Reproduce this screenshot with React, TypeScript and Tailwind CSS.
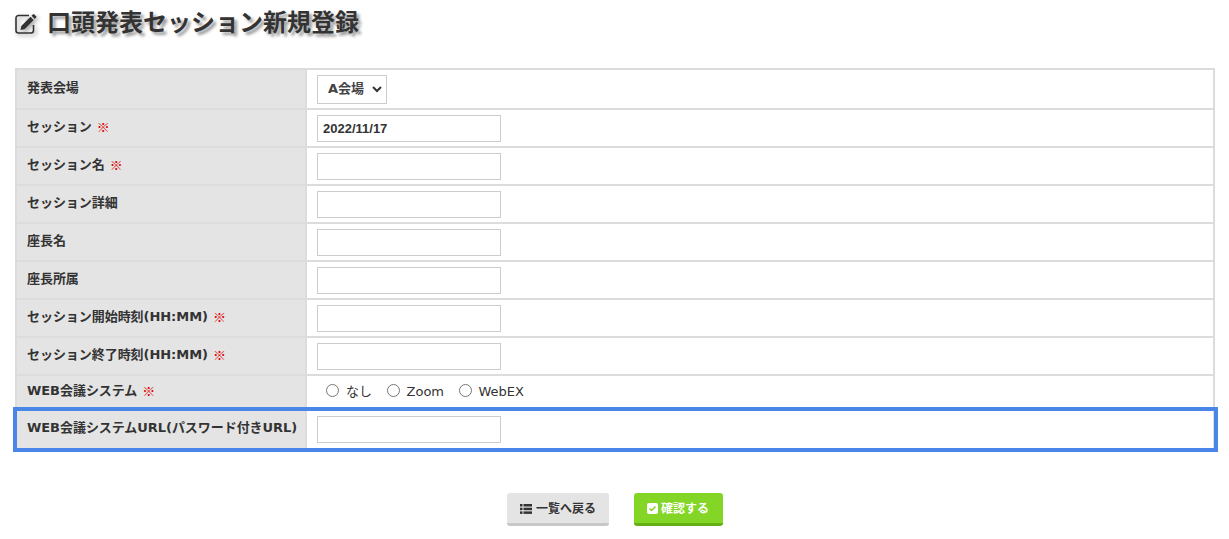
const jp = '"DejaVu Sans", "Noto Sans CJK JP", sans-serif';

function Req() {
  return <span className="text-[#e00000] font-bold ml-[5px] [font-family:'Noto_Sans_CJK_JP',sans-serif]">※</span>;
}

function Input({ value = "", w = "w-[184px]" }: { value?: string; w?: string }) {
  return (
    <input
      readOnly
      value={value}
      className={`${w} h-[27px] border border-[#cccccc] bg-white px-[5px] text-[13px] font-bold text-[#333] outline-none [font-family:'Liberation_Sans',sans-serif]`}
    />
  );
}

function Row({ label, req, children, h = "h-[38px]", pb = "pb-[3px]", last }: { label: string; req?: boolean; children: React.ReactNode; h?: string; pb?: string; last?: boolean }) {
  return (
    <div className={`flex ${h} ${last ? "" : "border-b-2 border-[#dcdcdc]"}`}>
      <div className={`w-[290px] shrink-0 bg-[#e4e4e4] pl-[10px] flex items-center text-[13px] leading-[20px] tracking-[-0.05px] font-bold text-[#333] border-r-2 border-[#dcdcdc] ${pb} whitespace-nowrap`}>
        <span>{label}</span>
        {req && <Req />}
      </div>
      <div className="flex-1 flex items-center pl-[10px] bg-white">{children}</div>
    </div>
  );
}

function Radio({ label }: { label: string }) {
  return (
    <label className="flex items-center text-[13px] text-[#333] font-normal">
      <span className="w-[13px] h-[13px] rounded-full border border-[#767676] bg-white mr-[7px] mb-[3px]" />
      {label}
    </label>
  );
}

export default function App() {
  return (
    <div className="w-[1229px] h-[539px] overflow-hidden bg-white" style={{ fontFamily: jp }}>
      <h1 className="flex items-center h-[24px] mt-[11px] ml-[15px] text-[24px] leading-[24px] font-bold text-[#333] [text-shadow:3px_3px_3px_rgba(0,0,0,0.4)]">
        <svg width="24" height="22" viewBox="0 0 24 22" className="mr-[8px] mt-[1px] [filter:drop-shadow(2px_2px_2px_rgba(0,0,0,0.4))]">
          <path d="M18.5 12v5.5a2.5 2.5 0 0 1-2.5 2.5H3.5A2.5 2.5 0 0 1 1 17.500V5a2.500 2.500 0 0 1 2.500-2.500H14" fill="none" stroke="#333" strokeWidth="1.6" />
          <path d="M5.500 17l.8-4L15.500 3.800l3.200 3.200L9.500 16.200z" fill="#333" />
          <path d="M16.500 2.800l1.400-1.400a1 1 0 0 1 1.400 0l1.800 1.800a1 1 0 0 1 0 1.400L19.700 6z" fill="#333" />
        </svg>
        口頭発表セッション新規登録
      </h1>

      <div className="relative mt-[33px] ml-[15px] w-[1200px] border-2 border-b-0 border-[#dcdcdc]">
        <Row label="発表会場" h="h-[40px]" pb="pb-[2px]">
          <span className="flex items-center justify-between w-[70px] h-[29px] border border-[#cccccc] pl-[10px] pr-[4px] text-[13px] font-bold text-[#444]">
            A会場
            <svg width="10" height="8" viewBox="0 0 10 8"><path d="M1 2l4 4 4-4" fill="none" stroke="#333" strokeWidth="2" /></svg>
          </span>
        </Row>
        <Row label="セッション" req><Input value="2022/11/17" /></Row>
        <Row label="セッション名" req><Input /></Row>
        <Row label="セッション詳細"><Input /></Row>
        <Row label="座長名"><Input /></Row>
        <Row label="座長所属"><Input /></Row>
        <Row label="セッション開始時刻(HH:MM)" req><Input /></Row>
        <Row label="セッション終了時刻(HH:MM)" req><Input /></Row>
        <Row label="WEB会議システム" req h="h-[33px]" pb="pb-[1px]">
          <div className="flex items-center gap-[14.5px] pl-[9px]">
            <Radio label="なし" />
            <Radio label="Zoom" />
            <Radio label="WebEX" />
          </div>
        </Row>
        <Row label="WEB会議システムURL(パスワード付きURL)" h="h-[41px]" last><Input /></Row>
        <div className="absolute left-[-4px] right-[-5px] top-[337px] h-[45px] border-4 border-[#4a86e8] pointer-events-none" />
      </div>

      <div className="flex justify-center gap-[25px] mt-[43px]">
        <button className="flex items-center justify-center gap-[4px] w-[102px] h-[33px] rounded-[3px] bg-[#e4e4e4] border-b-[3px] border-[#c8c8c8] pl-[1px] pt-[1px] text-[12px] font-bold text-[#333]">
          <svg width="12" height="10" viewBox="0 0 12 10" fill="#333">
            <rect x="0" y="0" width="2.5" height="2.5" /><rect x="0" y="3.7" width="2.5" height="2.5" /><rect x="0" y="7.4" width="2.5" height="2.5" />
            <rect x="3.5" y="0" width="8.5" height="2.5" /><rect x="3.5" y="3.7" width="8.5" height="2.5" /><rect x="3.5" y="7.4" width="8.5" height="2.5" />
          </svg>
          一覧へ戻る
        </button>
        <button className="flex items-center justify-center gap-[3px] w-[89px] h-[33px] rounded-[3px] bg-[#84d626] border-b-[3px] border-[#64b014] pt-[1px] text-[12px] font-bold text-white">
          <svg width="11" height="11" viewBox="0 0 11 11">
            <rect width="11" height="11" rx="2" fill="#fff" />
            <path d="M2.5 5.5l2 2 4-4" fill="none" stroke="#84d626" strokeWidth="1.5" />
          </svg>
          確認する
        </button>
      </div>
    </div>
  );
}
